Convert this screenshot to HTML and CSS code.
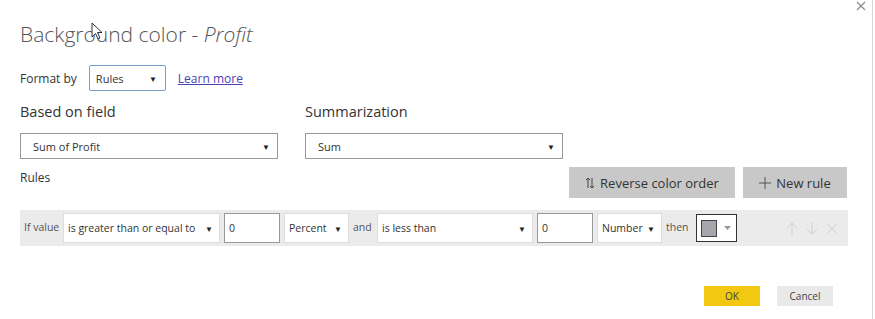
FILE: index.html
```html
<!DOCTYPE html>
<html lang="en">
<head>
    <meta charset="UTF-8">
    <title>Background color - Profit</title>
    <link rel="stylesheet" href="styles.css">
</head>
<body>
    <div class="dialog">
        <svg class="close" width="10" height="10" viewBox="0 0 10 10">
            <path d="M1 1 L9 9 M9 1 L1 9" stroke="#8c8c8c" stroke-width="1.2"/>
        </svg>

        <h1 class="title">Background color - <em>Profit</em></h1>

        <div class="format-row">
            <span class="label-small">Format by</span>
            <div class="select select-format">Rules <span class="caret">&#x25BC;</span></div>
            <a href="#" class="link">Learn more</a>
        </div>

        <div class="fields">
            <div class="field">
                <div class="field-label">Based on field</div>
                <div class="select select-wide">Sum of Profit <span class="caret">&#x25BC;</span></div>
            </div>
            <div class="field">
                <div class="field-label">Summarization</div>
                <div class="select select-wide">Sum <span class="caret">&#x25BC;</span></div>
            </div>
        </div>

        <div class="rules-head">
            <span class="label-small">Rules</span>
            <div class="actions">
                <button class="btn-gray btn-reverse">
                    <svg class="ico" width="10" height="12" viewBox="0 0 10 12">
                        <path d="M3 11 V1 M1 3 L3 1 L5 3 M7 1 V11 M5 9 L7 11 L9 9" stroke="#444" stroke-width="1" fill="none"/>
                    </svg>
                    Reverse color order
                </button>
                <button class="btn-gray btn-new">
                    <svg class="ico" width="12" height="12" viewBox="0 0 12 12">
                        <path d="M6 0 V12 M0 6 H12" stroke="#555" stroke-width="1" fill="none"/>
                    </svg>
                    New rule
                </button>
            </div>
        </div>

        <div class="rule">
            <span class="word word-if">If value</span>
            <div class="cell cell-op1">is greater than or equal to <span class="caret">&#x25BC;</span></div>
            <div class="cell cell-input">0</div>
            <div class="cell cell-type">Percent <span class="caret">&#x25BC;</span></div>
            <span class="word word-and">and</span>
            <div class="cell cell-op2">is less than <span class="caret">&#x25BC;</span></div>
            <div class="cell cell-input">0</div>
            <div class="cell cell-type">Number <span class="caret">&#x25BC;</span></div>
            <span class="word word-then">then</span>
            <div class="color-pick">
                <span class="swatch"></span>
                <svg class="mini-caret" width="7" height="4" viewBox="0 0 7 4">
                    <path d="M0 0 H7 L3.5 4 Z" fill="#999"/>
                </svg>
            </div>
            <div class="row-icons">
                <svg width="12" height="13" viewBox="0 0 12 13">
                    <path d="M6 13 V1 M1 6 L6 1 L11 6" stroke="#cfcfcf" stroke-width="1" fill="none"/>
                </svg>
                <svg width="12" height="13" viewBox="0 0 12 13">
                    <path d="M6 0 V12 M1 7 L6 12 L11 7" stroke="#cfcfcf" stroke-width="1" fill="none"/>
                </svg>
                <svg width="12" height="13" viewBox="0 0 12 13">
                    <path d="M1.5 2 L10.5 11 M10.5 2 L1.5 11" stroke="#cfcfcf" stroke-width="1" fill="none"/>
                </svg>
            </div>
        </div>

        <div class="footer">
            <button class="btn-ok">OK</button>
            <button class="btn-cancel">Cancel</button>
        </div>

        <svg class="cursor" width="13" height="19" viewBox="0 0 13 19">
            <path d="M1 1 L1 15 L4.5 11.5 L7 17 L9 16 L6.5 10.5 L11 10.5 Z" fill="#fff" stroke="#333" stroke-width="1"/>
        </svg>
    </div>
</body>
</html>
```

FILE: styles.css
```css
body {
    margin: 0;
    background-color: #fff;
    font-family: 'Open Sans', sans-serif;
    color: #333;
}
.dialog {
    position: relative;
    width: 873px;
    height: 319px;
    border-right: 1px solid #d6d6d6;
    box-sizing: border-box;
    padding-left: 20px;
    overflow: hidden;
}
.close {
    position: absolute;
    top: 1px;
    left: 856px;
}
.title {
    margin: 0;
    padding-top: 19px;
    height: 34px;
    font-size: 21px;
    font-weight: 300;
    color: #555;
    line-height: 30px;
}
.title em {
    font-style: italic;
}
.format-row {
    display: flex;
    align-items: center;
    margin-top: 12px;
    height: 26px;
}
.label-small {
    font-size: 12px;
    color: #333;
}
.select {
    display: flex;
    align-items: center;
    justify-content: space-between;
    box-sizing: border-box;
    background-color: #fff;
    font-size: 11px;
    color: #333;
}
.select-format {
    margin-left: 12px;
    width: 77px;
    height: 26px;
    padding: 0 8px 0 6px;
    border: 1px solid #7a9cc6;
    border-radius: 2px;
}
.caret {
    font-size: 8px;
    color: #222;
}
.link {
    margin-left: 12px;
    font-size: 12px;
    color: #4b3fb5;
}
.fields {
    display: flex;
    gap: 27px;
    margin-top: 10px;
}
.field-label {
    font-size: 14.5px;
    height: 24px;
    line-height: 22px;
    color: #333;
}
.select-wide {
    margin-top: 8px;
    width: 258px;
    height: 26px;
    padding: 0 7px 0 12px;
    border: 1px solid #999;
}
.rules-head {
    display: flex;
    justify-content: space-between;
    align-items: flex-start;
    width: 827px;
    margin-top: 8px;
}
.rules-head .label-small {
    margin-top: 2px;
}
.actions {
    display: flex;
    gap: 8px;
}
.btn-gray {
    display: flex;
    align-items: center;
    justify-content: center;
    gap: 5px;
    height: 31px;
    border: none;
    background-color: #c8c8c8;
    font-family: 'Open Sans', sans-serif;
    font-size: 13px;
    color: #333;
    padding: 0;
}
.btn-reverse {
    width: 166px;
}
.btn-new {
    width: 104px;
}
.rule {
    display: flex;
    align-items: center;
    gap: 4px;
    width: 828px;
    height: 36px;
    margin-top: 12px;
    background-color: #ebebeb;
    box-sizing: border-box;
    padding-left: 4px;
    font-size: 10.5px;
}
.word {
    color: #555;
    white-space: nowrap;
    margin-top: -2px;
}
.word-if {
    width: 35px;
}
.word-and {
    width: 20px;
}
.word-then {
    width: 26px;
}
.cell {
    display: flex;
    align-items: center;
    justify-content: space-between;
    box-sizing: border-box;
    height: 30px;
    background-color: #fff;
    border: 1px solid #ddd;
    padding: 0 6px 0 4px;
    color: #333;
    white-space: nowrap;
}
.cell-op1 {
    width: 157px;
}
.cell-op2 {
    width: 156px;
}
.cell-input {
    width: 56px;
    border: 1px solid #999;
}
.cell-type {
    width: 65px;
}
.color-pick {
    display: flex;
    align-items: center;
    box-sizing: border-box;
    width: 41px;
    height: 28px;
    border: 1px solid #333;
    background-color: #fff;
    padding-left: 4px;
}
.swatch {
    width: 14px;
    height: 15px;
    background-color: #a6a6ad;
    border: 1px solid #444;
}
.mini-caret {
    margin-left: 7px;
}
.row-icons {
    display: flex;
    gap: 8px;
    margin-left: 45px;
}
.footer {
    display: flex;
    gap: 17px;
    margin-top: 40px;
    margin-left: 684px;
}
.btn-ok,
.btn-cancel {
    width: 56px;
    height: 20px;
    border: none;
    padding: 0;
    font-family: 'Open Sans', sans-serif;
    font-size: 10px;
    color: #444;
}
.btn-ok {
    background-color: #f2c811;
}
.btn-cancel {
    background-color: #e9e9e9;
}
.cursor {
    position: absolute;
    left: 91px;
    top: 22px;
}
```
